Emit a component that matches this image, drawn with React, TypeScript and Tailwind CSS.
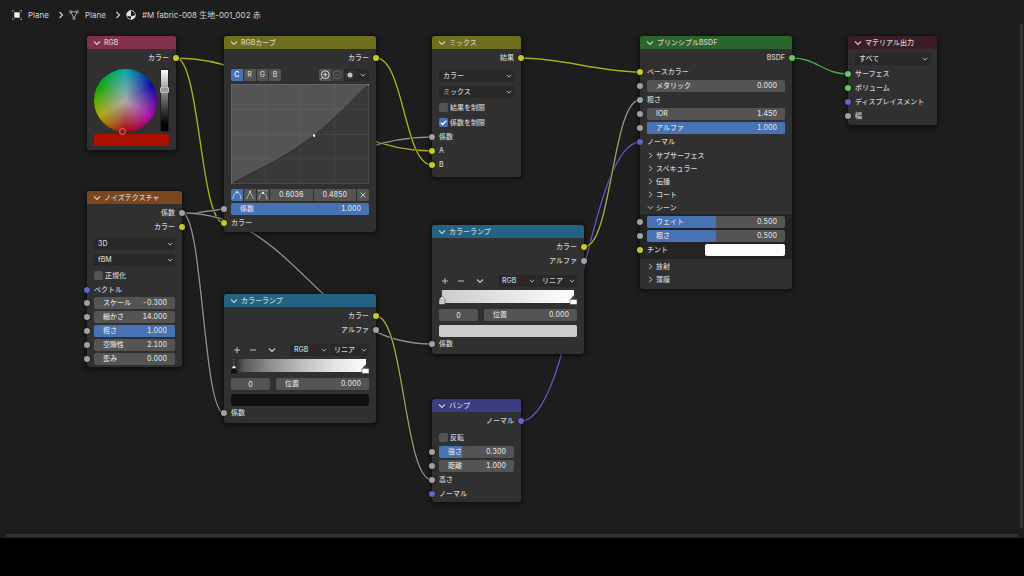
import { useState, type ReactNode } from "react";
import clsx from "clsx";

const SOCKET = {
  color: "bg-[#c7c729]",
  value: "bg-[#a1a1a1]",
  vector: "bg-[#6363c7]",
  shader: "bg-[#63c763]",
};

type SocketKind = keyof typeof SOCKET;

const WIRE = {
  color: "#adad27",
  value: "#8f8f8f",
  vector: "#5a5ab4",
  shader: "#4fa64f",
};

type Wire = {
  from: [number, number];
  to: [number, number];
  start: SocketKind;
  end: SocketKind;
  bend: number;
};

const wires: Wire[] = [
  { from: [176, 58], to: [432, 151], start: "color", end: "color", bend: 0.42 },
  { from: [176, 58], to: [224, 223], start: "color", end: "color", bend: 0.5 },
  { from: [182, 213], to: [432, 137], start: "value", end: "value", bend: 0.42 },
  { from: [182, 213], to: [432, 344], start: "value", end: "value", bend: 0.46 },
  { from: [182, 213], to: [224, 413], start: "value", end: "value", bend: 0.5 },
  { from: [376, 58], to: [432, 165], start: "color", end: "color", bend: 0.5 },
  { from: [376, 316], to: [432, 480], start: "color", end: "value", bend: 0.5 },
  { from: [521, 58], to: [640, 72], start: "color", end: "color", bend: 0.35 },
  { from: [521, 421], to: [640, 142], start: "vector", end: "vector", bend: 0.43 },
  { from: [584, 247], to: [640, 100], start: "color", end: "value", bend: 0.5 },
  { from: [792, 58], to: [848, 74], start: "shader", end: "shader", bend: 0.45 },
];

function Wires() {
  return (
    <svg className="pointer-events-none absolute inset-0 h-full w-full" fill="none">
      {wires.map((w, i) => {
        const [x0, y0] = w.from;
        const [x1, y1] = w.to;
        const h = (x1 - x0) * w.bend;
        const d = `M${x0} ${y0}C${x0 + h} ${y0} ${x1 - h} ${y1} ${x1} ${y1}`;
        return (
          <g key={i}>
            <linearGradient id={`wire-${i}`} gradientUnits="userSpaceOnUse" x1={x0} y1={y0} x2={x1} y2={y1}>
              <stop stopColor={WIRE[w.start]} />
              <stop offset="1" stopColor={WIRE[w.end]} />
            </linearGradient>
            <path d={d} stroke="#141414" strokeWidth="2.6" />
            <path d={d} stroke={`url(#wire-${i})`} strokeWidth="1.4" />
          </g>
        );
      })}
    </svg>
  );
}

function Chevron({ right = false, className }: { right?: boolean; className?: string }) {
  return (
    <svg viewBox="0 0 8 8" className={clsx("shrink-0", className)} fill="none" stroke="currentColor" strokeWidth="1.1">
      <path d={right ? "M2.5 1 5.5 4 2.5 7" : "M1 2.5 4 5.5 7 2.5"} />
    </svg>
  );
}

function Socket({ kind, side }: { kind: SocketKind; side: "in" | "out" }) {
  return (
    <span
      className={clsx(
        "absolute top-1/2 size-[6px] -translate-y-1/2 rounded-full shadow-[0_0_0_1px_rgba(20,20,20,0.5)]",
        SOCKET[kind],
        side === "in" ? "-left-[3px]" : "-right-[3px]",
      )}
    />
  );
}

function Row({ socket, out = false, className = "h-[14px]", children }: {
  socket?: SocketKind;
  out?: boolean;
  className?: string;
  children: ReactNode;
}) {
  return (
    <div className={clsx("relative flex items-center px-[7px]", out && "justify-end", className)}>
      {socket && <Socket kind={socket} side={out ? "out" : "in"} />}
      {children}
    </div>
  );
}

function Node({ title, header, className, children }: {
  title: string;
  header: string;
  className: string;
  children: ReactNode;
}) {
  return (
    <section className={clsx("absolute rounded-[3px] bg-[#303030] shadow-[0_1px_5px_1px_rgba(0,0,0,0.6)]", className)}>
      <h2 className={clsx("flex h-[13px] items-center gap-[3px] rounded-t-[3px] pl-[6px]", header)}>
        <Chevron className="size-[8px]" />
        {title}
      </h2>
      <div className="pt-[2px]">{children}</div>
    </section>
  );
}

function NumberField({ label, value, fill, className = "w-full" }: {
  label: string;
  value: string;
  fill?: "full" | "half" | "third";
  className?: string;
}) {
  const [text, setText] = useState(value);
  return (
    <label
      className={clsx(
        "relative flex h-[12px] items-center overflow-hidden rounded-[2px] bg-[#545454] pl-[9px] pr-[8px] text-[#dedede]",
        className,
      )}
    >
      {fill && (
        <span
          className={clsx(
            "absolute inset-y-0 left-0 bg-[#4772b3]",
            fill === "full" && "w-full",
            fill === "half" && "w-1/2",
            fill === "third" && "w-[30%]",
          )}
        />
      )}
      <span className="relative shrink-0">{label}</span>
      <input
        value={text}
        onChange={(e) => setText(e.target.value)}
        className="relative w-0 min-w-0 flex-1 bg-transparent text-right outline-none"
      />
    </label>
  );
}

function Select({ label, value, className = "w-full" }: { label: string; value: string; className?: string }) {
  return (
    <span className={clsx("relative flex h-[12px] items-center", className)}>
      <select aria-label={label} className="h-full w-full appearance-none rounded-[2px] bg-[#282828] pl-[4px] outline-none">
        <option>{value}</option>
      </select>
      <Chevron className="pointer-events-none absolute right-[2px] size-[6px]" />
    </span>
  );
}

function Check({ label, checked = false }: { label: string; checked?: boolean }) {
  const [on, setOn] = useState(checked);
  return (
    <Row className="h-[15px]">
      <label className="relative flex items-center gap-[2px]">
        <input
          type="checkbox"
          checked={on}
          onChange={(e) => setOn(e.target.checked)}
          className="size-[9px] appearance-none rounded-[2px] bg-[#545454] checked:bg-[#4772b3]"
        />
        {on && (
          <svg viewBox="0 0 9 9" className="pointer-events-none absolute left-0 size-[9px]" fill="none" stroke="#fff" strokeWidth="1.3">
            <path d="M1.8 4.7 3.7 6.5 7.3 2.6" />
          </svg>
        )}
        {label}
      </label>
    </Row>
  );
}

function Swatch({ label, color, className = "w-full" }: { label: string; color: string; className?: string }) {
  return (
    <input
      type="color"
      aria-label={label}
      defaultValue={color}
      className={clsx(
        "block h-[12px] appearance-none overflow-hidden rounded-[2px] bg-transparent p-0 [&::-webkit-color-swatch]:border-0 [&::-webkit-color-swatch-wrapper]:p-0",
        className,
      )}
    />
  );
}

function Panel({ title, open = false }: { title: string; open?: boolean }) {
  return (
    <button type="button" className="flex h-[13px] w-full items-center gap-[2px] pl-[7px] text-left">
      <Chevron right={!open} className="size-[7px]" />
      {title}
    </button>
  );
}

function CurvePlot() {
  return (
    <svg viewBox="0 0 138 100" preserveAspectRatio="none" className="mt-[3px] block h-[100px] w-full">
      <rect width="138" height="100" fill="#545454" />
      <path d="M0 100C28 85 57 72 83 51.5 106 33 120 17 138 0V100Z" fill="#393939" />
      <path
        d="M34.5 0V100M69 0V100M103.5 0V100M0 25H138M0 50.5H138M0 75H138"
        stroke="#fff"
        strokeOpacity="0.05"
      />
      <path d="M0.5 0V99.5H137.5V0.5H0" fill="none" stroke="#fff" strokeOpacity="0.09" />
      <path d="M0 100C28 85 57 72 83 51.5 106 33 120 17 138 0" fill="none" stroke="#262626" strokeWidth="0.8" />
      <rect x="82" y="50.5" width="2.2" height="2.2" fill="#fff" />
      <rect x="136.5" y="0" width="1.5" height="1.5" fill="#999" />
      <rect x="0" y="98.5" width="1.5" height="1.5" fill="#777" />
    </svg>
  );
}

function CurvesNode() {
  const [channel, setChannel] = useState("C");
  return (
    <Node title="RGBカーブ" header="bg-[#6e6e1d]" className="left-[224px] top-[36px] w-[152px] pb-[2px]">
      <Row socket="color" out>カラー</Row>
      <div className="px-[7px] pt-[4px]">
        <div className="flex justify-between">
          <div className="flex h-[12px] w-[50px] gap-px overflow-hidden rounded-[2px]">
            {["C", "R", "G", "B"].map((c) => (
              <button
                key={c}
                type="button"
                onClick={() => setChannel(c)}
                className={clsx("flex-1", c === channel ? "bg-[#4772b3] text-white" : "bg-[#545454]")}
              >
                {c}
              </button>
            ))}
          </div>
          <div className="flex h-[12px] w-[50px] overflow-hidden rounded-[2px]">
            <button type="button" aria-label="Zoom in" className="flex flex-1 items-center justify-center bg-[#545454] text-[#e0e0e0]">
              <svg viewBox="0 0 12 12" className="size-[12px]" fill="none" stroke="currentColor" strokeWidth="0.9">
                <circle cx="6.3" cy="5.7" r="3.9" />
                <path d="M6.3 3.7v4M4.3 5.7h4M3.4 8.5 1.5 10.5" />
              </svg>
            </button>
            <button type="button" aria-label="Zoom out" className="flex flex-1 items-center justify-center bg-[#3c3c3c] text-[#6a6a6a]">
              <svg viewBox="0 0 12 12" className="size-[12px]" fill="none" stroke="currentColor" strokeWidth="0.9">
                <circle cx="6.3" cy="5.7" r="3.9" />
                <path d="M4.3 5.7h4M3.4 8.5 1.5 10.5" />
              </svg>
            </button>
            <button type="button" aria-label="Clipping" className="flex flex-1 items-center justify-center bg-[#282828]">
              <svg viewBox="0 0 12 12" className="size-[12px]">
                <rect x="2.5" y="2.5" width="7" height="7" fill="none" stroke="#555" strokeWidth="0.8" strokeDasharray="1 1" />
                <circle cx="6" cy="6" r="2.5" fill="#c4c4c4" />
              </svg>
            </button>
            <button type="button" aria-label="Curve tools" className="flex flex-1 items-center justify-center border-l border-[#303030] bg-[#282828]">
              <Chevron className="size-[6px]" />
            </button>
          </div>
        </div>
        <CurvePlot />
        <div className="mb-px mt-[5px] flex h-[12px] gap-px overflow-hidden rounded-[2px] text-[#dedede]">
          <button type="button" aria-label="Auto handle" className="flex w-[12px] items-center justify-center bg-[#4772b3]">
            <svg viewBox="0 0 12 12" className="size-[12px]" fill="none" stroke="currentColor" strokeWidth="0.8">
              <path d="M2 10C2.5 6 4 3.3 6 3.3S9.5 6 10 10" />
              <rect x="5" y="2.2" width="2" height="2" fill="currentColor" stroke="none" />
            </svg>
          </button>
          <button type="button" aria-label="Vector handle" className="flex w-[12px] items-center justify-center bg-[#545454]">
            <svg viewBox="0 0 12 12" className="size-[12px]" fill="none" stroke="currentColor" strokeWidth="0.7">
              <path d="M2.5 10 6 3 9.5 10" />
              <rect x="5.2" y="1.8" width="1.6" height="1.6" fill="currentColor" stroke="none" />
            </svg>
          </button>
          <button type="button" aria-label="Auto clamped handle" className="flex w-[12px] items-center justify-center bg-[#545454]">
            <svg viewBox="0 0 12 12" className="size-[12px]" fill="none" stroke="currentColor" strokeWidth="0.7">
              <path d="M2 10.5C2.5 6 4 4 6 4S9.5 6 10 10.5" />
              <path d="M1 1.7H11" strokeDasharray="1.6 1" />
              <rect x="5" y="3" width="2" height="2" fill="currentColor" stroke="none" />
            </svg>
          </button>
          <input aria-label="Point X" defaultValue="0.6036" className="w-0 flex-1 bg-[#545454] text-center outline-none" />
          <input aria-label="Point Y" defaultValue="0.4850" className="w-0 flex-1 bg-[#545454] text-center outline-none" />
          <button type="button" aria-label="Delete point" className="flex w-[12px] items-center justify-center bg-[#545454]">
            <svg viewBox="0 0 8 8" className="size-[8px]" fill="none" stroke="currentColor" strokeWidth="0.8">
              <path d="M1.5 1.5 6.5 6.5M6.5 1.5 1.5 6.5" />
            </svg>
          </button>
        </div>
      </div>
      <Row socket="value"><NumberField label="係数" value="1.000" fill="full" /></Row>
      <Row socket="color">カラー</Row>
    </Node>
  );
}

function RampNode({ className, color, bar }: { className: string; color: string; bar: string }) {
  return (
    <Node title="カラーランプ" header="bg-[#246283]" className={clsx("w-[152px] pb-[3px]", className)}>
      <Row socket="color" out>カラー</Row>
      <Row socket="value" out>アルファ</Row>
      <div className="px-[7px] pt-[6px]">
        <div className="flex h-[13px] items-center">
          <button type="button" aria-label="Add stop" className="flex w-[12px] justify-center">
            <svg viewBox="0 0 8 8" className="size-[8px]" fill="none" stroke="currentColor" strokeWidth="0.9">
              <path d="M4 1V7M1 4H7" />
            </svg>
          </button>
          <button type="button" aria-label="Remove stop" className="ml-[4px] flex w-[12px] justify-center">
            <svg viewBox="0 0 8 8" className="size-[8px]" fill="none" stroke="currentColor" strokeWidth="0.9">
              <path d="M1 4H7" />
            </svg>
          </button>
          <button type="button" aria-label="Ramp tools" className="ml-[7px] flex w-[12px] justify-center">
            <Chevron className="size-[8px]" />
          </button>
          <div className="ml-auto flex gap-px">
            <Select label="Color mode" value="RGB" className="w-[39px]" />
            <Select label="Interpolation" value="リニア" className="w-[39px]" />
          </div>
        </div>
        <div className="relative mt-[3px] h-[14px] px-[3px]">
          <div className={clsx("h-[13px]", bar)} />
          <svg viewBox="0 0 8 15" className="absolute left-0 top-0 h-[15px] w-[8px]">
            <path d="M3 0V6" stroke="#999" strokeWidth="0.8" strokeDasharray="1 1" />
            <path d="M0 9.5 3 6 6 9.5Z" fill="#e8e8e8" />
            <path d="M0 9.5H6V14.5H0Z" fill={color} />
            <path d="M0 14.5V9.5L3 6 6 9.5V14.5Z" fill="none" stroke="#222" strokeWidth="0.5" />
          </svg>
          <svg viewBox="0 0 8 15" className="absolute right-0 top-0 h-[15px] w-[8px]">
            <path d="M1 9.5 4.5 5.5 8 9.5Z" fill="#444" />
            <path d="M1 9.5H8V14.5H1Z" fill="#fff" stroke="#333" strokeWidth="0.5" />
          </svg>
        </div>
        <div className="mt-[5px] flex gap-[6px]">
          <input
            aria-label="Stop index"
            defaultValue="0"
            className="h-[12px] w-[39px] rounded-[2px] bg-[#545454] text-center text-[#dedede] outline-none"
          />
          <NumberField label="位置" value="0.000" className="flex-1" />
        </div>
        <div className="mt-[4px]">
          <Swatch label="Stop color" color={color} />
        </div>
      </div>
      <Row socket="value">係数</Row>
    </Node>
  );
}

function RgbNode() {
  return (
    <Node title="RGB" header="bg-[#83314a]" className="left-[87px] top-[36px] w-[89px] pb-[4px]">
      <Row socket="color" out>カラー</Row>
      <div className="px-[7px] pt-[4px]">
        <div className="flex justify-between">
          <div className="relative size-[63px] rounded-full bg-[radial-gradient(closest-side,#aaaaaa,rgba(170,170,170,0)),conic-gradient(#00aaaa,#0000aa_60deg,#aa00aa_120deg,#aa0000_180deg,#aaaa00_240deg,#00aa00_300deg,#00aaaa)]">
            <span className="absolute -bottom-[3px] left-[25px] size-[7px] rounded-full border border-[#d07a70] bg-[#aa1000]" />
          </div>
          <div className="relative h-[63px] w-[9px] rounded-[1px] border border-[#222] bg-linear-to-b from-white to-black">
            <span className="absolute -left-[1px] top-[17px] h-[6px] w-[9px] rounded-[1px] border border-[#bbb] bg-[#999]" />
          </div>
        </div>
        <div className="mt-[2px]">
          <Swatch label="Color" color="#aa1000" />
        </div>
      </div>
    </Node>
  );
}

function Breadcrumb() {
  return (
    <nav className="flex h-[29px] items-center pl-[12px] text-[8px] font-normal proportional-nums text-[#d4d4d4]">
      <svg viewBox="0 0 10 10" className="size-[10px]" fill="none" stroke="#888">
        <path d="M0.5 2.5V0.5H2.5M7.5 0.5H9.5V2.5M9.5 7.5V9.5H7.5M2.5 9.5H0.5V7.5" strokeWidth="0.8" />
        <rect x="2.3" y="2.3" width="5.4" height="5.4" fill="#eee" stroke="none" />
      </svg>
      <a href="#object" className="ml-[6px]">Plane</a>
      <Chevron right className="ml-[8px] size-[8px]" />
      <svg viewBox="0 0 10 10" className="ml-[4px] size-[10px]" fill="#1d1d1d" stroke="#ccc" strokeWidth="0.8">
        <path d="M1.8 1.8H8.2L5 8.4Z" />
        <circle cx="1.6" cy="1.7" r="1.1" />
        <circle cx="8.4" cy="1.7" r="1.1" />
        <circle cx="5" cy="8.4" r="1.1" />
      </svg>
      <a href="#mesh" className="ml-[6px]">Plane</a>
      <Chevron right className="ml-[8px] size-[8px]" />
      <svg viewBox="0 0 10 10" className="ml-[4px] size-[10px]">
        <circle cx="5" cy="5" r="4.4" fill="#1d1d1d" stroke="#ddd" strokeWidth="0.8" />
        <path d="M5 0.6A4.4 4.4 0 0 0 0.6 5C2 6.4 3.5 6.6 5 6.3Z" fill="#e6e6e6" />
        <path d="M5 6.3C6.7 6 8.2 5.6 9.4 5A4.4 4.4 0 0 1 5 9.4Z" fill="#e6e6e6" />
      </svg>
      <a href="#material" className="ml-[6px]">#M fabric-008 生地-001_002 赤</a>
    </nav>
  );
}

export default function App() {
  return (
    <div className="flex min-h-screen flex-col bg-black font-['Inter','Noto_Sans_CJK_JP',sans-serif] text-[7px] font-medium leading-[10px] tabular-nums text-[#d0d0d0]">
      <main className="relative flex-1 overflow-hidden bg-[#1d1d1d]">
        <Breadcrumb />
        <Wires />

        <RgbNode />

        <Node title="ノイズテクスチャ" header="bg-[#79461d]" className="left-[87px] top-[191px] w-[95px] pb-px">
          <Row socket="value" out>係数</Row>
          <Row socket="color" out>カラー</Row>
          <div className="pt-[2px]">
            <Row className="h-[16px]"><Select label="Dimensions" value="3D" /></Row>
            <Row className="h-[16px]"><Select label="Noise type" value="fBM" /></Row>
            <Check label="正規化" />
          </div>
          <Row socket="vector" className="h-[13px]">ベクトル</Row>
          <Row socket="value"><NumberField label="スケール" value="-0.300" /></Row>
          <Row socket="value"><NumberField label="細かさ" value="14.000" /></Row>
          <Row socket="value"><NumberField label="粗さ" value="1.000" fill="full" /></Row>
          <Row socket="value"><NumberField label="空隙性" value="2.100" /></Row>
          <Row socket="value"><NumberField label="歪み" value="0.000" /></Row>
        </Node>

        <CurvesNode />

        <RampNode
          className="left-[224px] top-[294px]"
          color="#111111"
          bar="bg-[linear-gradient(90deg,#222222,#5a5a5a_8%,#898989_25%,#bcbcbc_50%,#e1e1e1_75%,#ffffff)]"
        />

        <Node title="ミックス" header="bg-[#6e6e1d]" className="left-[432px] top-[36px] w-[89px] pb-[5px]">
          <Row socket="color" out>結果</Row>
          <div className="pt-[3px]">
            <Row className="h-[16px]"><Select label="Data type" value="カラー" /></Row>
            <Row className="h-[16px]"><Select label="Blend mode" value="ミックス" /></Row>
            <Check label="結果を制限" />
            <Check label="係数を制限" checked />
          </div>
          <Row socket="value">係数</Row>
          <Row socket="color">A</Row>
          <Row socket="color">B</Row>
        </Node>

        <RampNode
          className="left-[432px] top-[225px]"
          color="#cccccc"
          bar="bg-linear-to-r from-[#cccccc] to-white"
        />

        <Node title="バンプ" header="bg-[#3c3c83]" className="left-[432px] top-[399px] w-[89px] pb-px">
          <Row socket="vector" out>ノーマル</Row>
          <div className="pt-[2px]">
            <Check label="反転" />
          </div>
          <Row socket="value"><NumberField label="強さ" value="0.300" fill="third" /></Row>
          <Row socket="value"><NumberField label="距離" value="1.000" /></Row>
          <Row socket="value">高さ</Row>
          <Row socket="vector">ノーマル</Row>
        </Node>

        <Node title="プリンシプルBSDF" header="bg-[#2b652b]" className="left-[640px] top-[36px] w-[152px] pb-[3px]">
          <Row socket="shader" out>BSDF</Row>
          <Row socket="color">ベースカラー</Row>
          <Row socket="value"><NumberField label="メタリック" value="0.000" /></Row>
          <Row socket="value">粗さ</Row>
          <Row socket="value"><NumberField label="IOR" value="1.450" /></Row>
          <Row socket="value"><NumberField label="アルファ" value="1.000" fill="full" /></Row>
          <Row socket="vector">ノーマル</Row>
          <Panel title="サブサーフェス" />
          <Panel title="スペキュラー" />
          <Panel title="伝播" />
          <Panel title="コート" />
          <Panel title="シーン" open />
          <div className="mb-px bg-[#232323] pb-[2px] pt-px">
            <Row socket="value"><NumberField label="ウェイト" value="0.500" fill="half" /></Row>
            <Row socket="value"><NumberField label="粗さ" value="0.500" fill="half" /></Row>
            <Row socket="color">
              チント
              <Swatch label="チント" color="#ffffff" className="ml-auto w-[80px]" />
            </Row>
          </div>
          <Panel title="放射" />
          <Panel title="薄膜" />
        </Node>

        <Node title="マテリアル出力" header="bg-[#3c1d26]" className="left-[848px] top-[36px] w-[89px] pb-[2px]">
          <Row className="h-[16px]"><Select label="Target" value="すべて" /></Row>
          <Row socket="shader">サーフェス</Row>
          <Row socket="shader">ボリューム</Row>
          <Row socket="vector">ディスプレイスメント</Row>
          <Row socket="value">幅</Row>
        </Node>

        <div className="absolute bottom-[10px] right-px top-[24px] w-[3px] rounded-full bg-[#343434]" />
        <div className="absolute bottom-px left-[6px] right-[6px] h-[3px] rounded-full bg-[#343434]" />
      </main>
      <footer className="h-[38px]" />
    </div>
  );
}
